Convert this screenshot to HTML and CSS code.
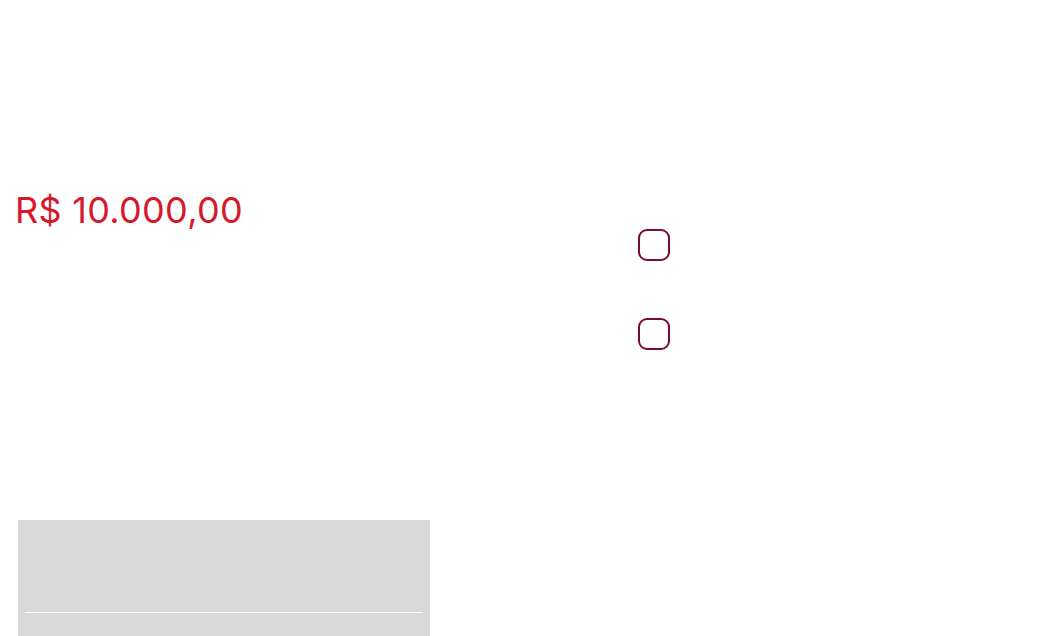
FILE: index.html
```html
<!DOCTYPE html>
<html lang="pt-BR">
<head>
<meta charset="utf-8">
<title>Valor</title>
<link rel="stylesheet" href="styles.css">
</head>
<body>
<main class="page">
  <section class="left">
    <div class="price">R$ 10.000,00</div>
    <div class="panel">
      <div class="panel-line"></div>
    </div>
  </section>
  <section class="right">
    <div class="checks">
      <span class="checkbox"></span>
      <span class="checkbox"></span>
    </div>
  </section>
</main>
</body>
</html>
```
FILE: styles.css
```css
html, body {
  margin: 0;
  padding: 0;
  background: #ffffff;
  height: 100%;
  overflow: hidden;
}
body {
  font-family: Inter, "Noto Sans", sans-serif;
}
.page {
  display: grid;
  grid-template-columns: 638px 1fr;
  height: 636px;
}
.left {
  display: flex;
  flex-direction: column;
  padding-top: 188px;
}
.price {
  padding-left: 15px;
  font-size: 36px;
  line-height: 44px;
  color: #d7182a;
  font-weight: 400;
  letter-spacing: 0.3px;
}
.panel {
  margin-top: 288px;
  margin-left: 18px;
  width: 412px;
  flex: 1;
  background: #d9d9d9;
  display: flex;
  flex-direction: column;
  padding: 92px 8px 0 7px;
  box-sizing: border-box;
}
.panel-line {
  height: 1px;
  background: #ffffff;
}
.right {
  padding-top: 229px;
}
.checks {
  display: flex;
  flex-direction: column;
  gap: 57px;
}
.checkbox {
  display: block;
  width: 32px;
  height: 32px;
  box-sizing: border-box;
  border: 2px solid #7a0a3a;
  border-radius: 9px;
}
```
